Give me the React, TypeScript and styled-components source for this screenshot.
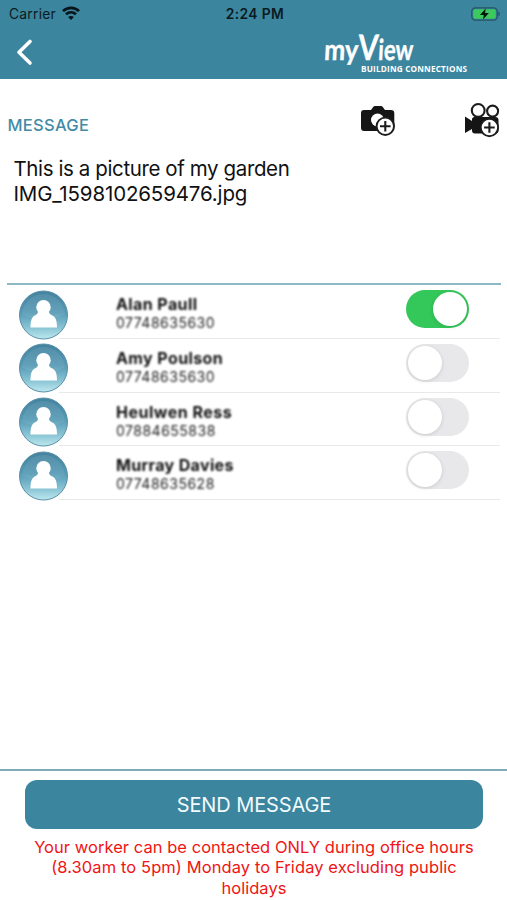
import React, { useState } from "react";
import styled, { createGlobalStyle } from "styled-components";

const TEAL = "#3b859f";

const GlobalStyle = createGlobalStyle`
  * { box-sizing: border-box; }
  body { margin: 0; background: #fff; font-family: Inter, "Liberation Sans", sans-serif; }
  button { font: inherit; border: 0; padding: 0; background: none; cursor: pointer; }
`;

const Screen = styled.div`
  width: 507px;
  height: 900px;
  display: flex;
  flex-direction: column;
  overflow: hidden;
  background: #fff;
`;

const Header = styled.header`
  height: 79px;
  flex: none;
  background: ${TEAL};
`;

const StatusBar = styled.div`
  height: 28px;
  display: grid;
  grid-template-columns: 1fr auto 1fr;
  align-items: center;
  padding: 0 6px 0 9px;
  color: #0b1a20;
`;

const Carrier = styled.div`
  display: flex;
  align-items: center;
  gap: 6px;
  font-size: 13.8px;
  letter-spacing: 0.25px;
  svg { margin-top: -2px; }
`;

const Clock = styled.div`
  font-size: 13.8px;
  font-weight: 600;
  letter-spacing: 0.4px;
`;

const Battery = styled.svg`
  justify-self: end;
  display: block;
`;

const NavBar = styled.div`
  height: 51px;
  display: flex;
  justify-content: space-between;
  padding: 0 39px 0 16px;
`;

const BackButton = styled.button`
  width: 18px;
  height: 28px;
  margin-top: 10px;
`;

const Brand = styled.div`
  width: 144px;
  color: #fff;
`;

const Wordmark = styled.svg`
  display: block;
  overflow: visible;
  font-family: Lato, sans-serif;
  fill: #fff;
`;

const Compose = styled.section`
  height: 206px;
  flex: none;
  margin: 0 6px 0 7px;
  border-bottom: 2px solid #8db8c6;
`;

const ComposeHead = styled.div`
  height: 76px;
  display: flex;
  justify-content: space-between;
  align-items: flex-start;
`;

const Label = styled.h2`
  margin: 35px 0 0 0.5px;
  font-size: 16.5px;
  line-height: 22px;
  font-weight: 500;
  letter-spacing: 0.3px;
  color: #438ba5;
`;

const MediaButtons = styled.div`
  display: flex;
  gap: 68px;
  margin: 23px 1px 0 0;
  svg { display: block; }
`;

const MessageBody = styled.div`
  padding: 1px 6.5px;
  color: #111;
`;

const BodyLine = styled.div<{ $tracking: number }>`
  height: 25px;
  line-height: 25px;
  font-size: 20.5px;
  white-space: nowrap;
  letter-spacing: ${(p) => p.$tracking}px;
`;

const Contacts = styled.ul`
  list-style: none;
  margin: 0 7px 0 19px;
  padding: 0;
`;

const ContactRow = styled.li`
  height: 53.75px;
  display: grid;
  grid-template-columns: 97px 1fr 63px;
  padding: 0 31px 0 0;
  background: linear-gradient(#e9e9e9, #e9e9e9) 40px 100% / 100% 1px no-repeat;
`;

const AvatarIcon = styled.svg`
  width: 50px;
  height: 50px;
  margin-top: 4.7px;
`;

const Person = styled.div`
  padding-top: 9px;
  filter: blur(0.9px);
`;

const Name = styled.div<{ $tracking: number }>`
  font-size: 16px;
  line-height: 20px;
  font-weight: 700;
  color: #111;
  letter-spacing: ${(p) => p.$tracking}px;
`;

const Phone = styled.div`
  font-size: 14px;
  line-height: 18px;
  color: #222;
  letter-spacing: 0.5px;
`;

const Toggle = styled.button<{ $on: boolean }>`
  width: 63px;
  height: 38px;
  margin-top: 5px;
  padding: 2px;
  border-radius: 19px;
  display: flex;
  justify-content: ${(p) => (p.$on ? "flex-end" : "flex-start")};
  background: ${(p) => (p.$on ? "#34c759" : "#e8e8ea")};
`;

const Knob = styled.span`
  width: 34px;
  height: 34px;
  border-radius: 50%;
  background: #fff;
  box-shadow: 0 1px 4px rgba(0, 0, 0, 0.13);
`;

const Footer = styled.footer`
  margin-top: auto;
  height: 131px;
  flex: none;
  border-top: 2px solid #7fabbb;
  padding: 9px 24px 0 25px;
`;

const SendButton = styled.button`
  display: block;
  width: 458px;
  height: 49px;
  border-radius: 12px;
  background: ${TEAL};
  color: #f1fafc;
  font-size: 20px;
  letter-spacing: -0.1px;
`;

const Notice = styled.div`
  margin-top: 7.5px;
  color: #f01414;
  text-align: center;
`;

const NoticeLine = styled.div<{ $tracking: number }>`
  font-size: 16.5px;
  line-height: 20.5px;
  white-space: nowrap;
  letter-spacing: ${(p) => p.$tracking}px;
`;

const WifiIcon = () => (
  <svg width="18" height="14" viewBox="0 0 18 14" fill="none" stroke="#07141a" strokeWidth="2.7">
    <path d="M1 5.1C5.5.7 12.5.7 17 5.1" />
    <path d="M4 8.3c2.9-2.7 7.1-2.7 10 0" />
    <path d="M9 14 6.1 11c1.7-1.5 4.1-1.5 5.8 0Z" fill="#07141a" stroke="none" />
  </svg>
);

const BatteryIcon = () => (
  <Battery width="30" height="14" viewBox="0 0 30 14">
    <rect x="0.8" y="0.8" width="25.4" height="12.4" rx="3.6" fill="none" stroke="#245565" strokeWidth="1.3" />
    <rect x="2.3" y="2.3" width="22.4" height="9.4" rx="2" fill="#3cc95f" />
    <path d="M27.4 4.8c2 .5 2 3.9 0 4.4Z" fill="#245565" />
    <path d="M14.8 1.5 9 7.9h3.8l-.8 4.7 5.9-6.5h-3.9Z" fill="#06150b" />
  </Battery>
);

const PlusBadge = ({ x, y }: { x: number; y: number }) => (
  <g transform={`translate(${x} ${y})`}>
    <circle r="8.7" fill="#fff" stroke="#1c1c1c" strokeWidth="1.9" />
    <path d="M-5.3 0H5.3M0-5.3V5.3" stroke="#1c1c1c" strokeWidth="2.1" />
  </g>
);

const CameraIcon = () => (
  <svg width="36" height="36" viewBox="0 0 36 36">
    <path d="M4 8h7l2.200-3.100Q13.800 4 15 4h6q1.200 0 1.800.9L25 8h6q3.300 0 3.300 3.300v14.400q0 3.300-3.300 3.300H4.200Q1 29 1 25.700V11.300Q1 8 4 8Z" fill="#151515" />
    <circle cx="17.500" cy="18" r="6.500" fill="#fff" />
    <PlusBadge x={25.3} y={24.3} />
  </svg>
);

const VideoIcon = () => (
  <svg width="36" height="38" viewBox="0 0 36 38">
    <path d="M1 14.5 8 19v-1.5Q8 15 10.5 15H31q3.500 0 3.500 3v10.500q0 3-3 3H11q-3 0-3-3V27l-7 4Z" fill="#151515" />
    <circle cx="14.2" cy="8.4" r="6.4" fill="#fff" stroke="#1c1c1c" strokeWidth="2.1" />
    <circle cx="28.6" cy="9.1" r="5.5" fill="#fff" stroke="#1c1c1c" strokeWidth="2.1" />
    <PlusBadge x={25.4} y={25.5} />
  </svg>
);

const Avatar = ({ id }: { id: string }) => (
  <AvatarIcon viewBox="0 0 50 50">
    <defs>
      <linearGradient id={id} x1="0" y1="0" x2="0" y2="1">
        <stop offset="0" stopColor="#43829e" />
        <stop offset="0.45" stopColor="#569ab5" />
        <stop offset="0.75" stopColor="#86c2d3" />
        <stop offset="1" stopColor="#bde8ee" />
      </linearGradient>
    </defs>
    <circle cx="24.5" cy="25" r="24" fill={`url(#${id})`} stroke="#598fa7" strokeWidth="1" />
    <path d="M3 24C5 12 13 4 24.5 4S44 12 46 24C36 31 13 31 3 24Z" fill="#fff" opacity="0.08" />
    <circle cx="24.5" cy="17.2" r="7.2" fill="#fff" />
    <path d="M19 21h11c0 2.600 1 3.500 3.400 4.600C37 27.300 38 31.500 38 37.600H11.500c0-6.100 1-10.300 4.200-12C18 24.500 19 23.600 19 21Z" fill="#fff" />
  </AvatarIcon>
);

const contacts = [
  { name: "Alan Paull", phone: "07748635630", tracking: 0.4 },
  { name: "Amy Poulson", phone: "07748635630", tracking: 0.4 },
  { name: "Heulwen Ress", phone: "07884655838", tracking: 0.5 },
  { name: "Murray Davies", phone: "07748635628", tracking: 0.35 },
];

export default function App() {
  const [enabled, setEnabled] = useState([true, false, false, false]);
  const flip = (index: number) => setEnabled(enabled.map((on, i) => (i === index ? !on : on)));

  return (
    <Screen>
      <GlobalStyle />
      <Header>
        <StatusBar>
          <Carrier>Carrier <WifiIcon /></Carrier>
          <Clock>2:24 PM</Clock>
          <BatteryIcon />
        </StatusBar>
        <NavBar>
          <BackButton aria-label="Back">
            <svg width="18" height="28" viewBox="0 0 18 28" fill="none" stroke="#fff" strokeWidth="3.6" strokeLinecap="round" strokeLinejoin="round">
              <path d="M14 3.5 3 14.3 14 25" />
            </svg>
          </BackButton>
          <Brand>
            <Wordmark width="144" height="50" viewBox="0 0 144 50">
              <g transform="translate(0.5 0) skewX(-3)" fontWeight="700" stroke="#fff" strokeWidth="0.4">
                <text x="1" y="32" fontSize="29" textLength="34" lengthAdjust="spacingAndGlyphs">my</text>
                <text x="35" y="32" fontSize="35" textLength="20" lengthAdjust="spacingAndGlyphs">V</text>
                <text x="55" y="32" fontSize="29" textLength="35" lengthAdjust="spacingAndGlyphs">iew</text>
              </g>
              <text x="37" y="43.5" fontSize="8.2" fontWeight="700" fontFamily="Open Sans, sans-serif" textLength="106">BUILDING CONNECTIONS</text>
            </Wordmark>
          </Brand>
        </NavBar>
      </Header>
      <Compose>
        <ComposeHead>
          <Label>MESSAGE</Label>
          <MediaButtons>
            <CameraIcon />
            <VideoIcon />
          </MediaButtons>
        </ComposeHead>
        <MessageBody>
          <BodyLine $tracking={-0.39}>This is a picture of my garden</BodyLine>
          <BodyLine $tracking={-0.15}>IMG_1598102659476.jpg</BodyLine>
        </MessageBody>
      </Compose>
      <Contacts>
        {contacts.map((contact, i) => (
          <ContactRow key={contact.name}>
            <Avatar id={`avatar-${i}`} />
            <Person>
              <Name $tracking={contact.tracking}>{contact.name}</Name>
              <Phone>{contact.phone}</Phone>
            </Person>
            <Toggle $on={enabled[i]} onClick={() => flip(i)} role="switch" aria-checked={enabled[i]} aria-label={contact.name}>
              <Knob />
            </Toggle>
          </ContactRow>
        ))}
      </Contacts>
      <Footer>
        <SendButton>SEND MESSAGE</SendButton>
        <Notice>
          <NoticeLine $tracking={0.04}>Your worker can be contacted ONLY during office hours</NoticeLine>
          <NoticeLine $tracking={0.09}>(8.30am to 5pm) Monday to Friday excluding public</NoticeLine>
          <NoticeLine $tracking={0}>holidays</NoticeLine>
        </Notice>
      </Footer>
    </Screen>
  );
}
